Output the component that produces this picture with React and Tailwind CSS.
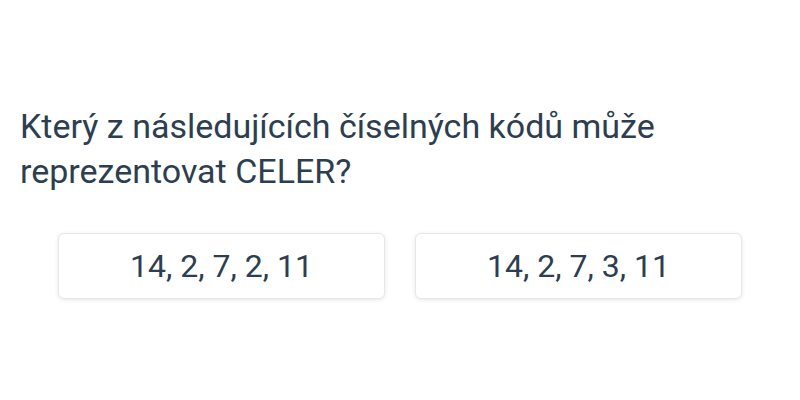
import React from 'react';

const options = ['14, 2, 7, 2, 11', '14, 2, 7, 3, 11'];

function App() {
  return (
    <div className="w-[800px] h-[400px] bg-white text-[#2c3e50] font-['Roboto',sans-serif] pt-[104px]">
      {/* Question */}
      <h1 className="px-5 text-[34px] leading-[45px] font-normal">
        Který z následujících číselných kódů může reprezentovat CELER?
      </h1>

      {/* Answers */}
      <div className="grid grid-cols-2 gap-[30px] px-[58px] mt-[39px]">
        {options.map((opt) => (
          <button
            key={opt}
            className="h-[66px] rounded-md border border-gray-200 bg-white shadow-[0_1px_4px_rgba(0,0,0,0.1)] text-[32px] text-[#2c3e50]"
          >
            {opt}
          </button>
        ))}
      </div>
    </div>
  );
}

export default App;
